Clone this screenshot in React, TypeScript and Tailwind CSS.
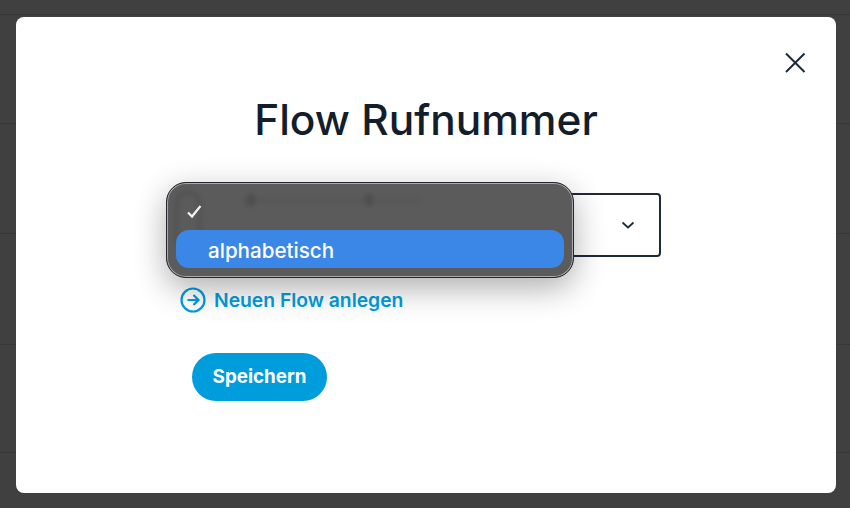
import React from "react";

export default function App() {
  return (
    <div className="relative w-[850px] h-[508px] overflow-hidden bg-[#404040] font-['Inter',sans-serif]">
      {/* dimmed page rows behind the dialog */}
      <div className="flex flex-col pt-[14px]">
        {[109, 110, 111, 108, 56].map((h, i) => (
          <div key={i} className="border-t border-[#383838]" style={{ height: h }} />
        ))}
      </div>

      {/* dialog */}
      <div className="absolute left-[16px] top-[17px] w-[820px] h-[476px] rounded-[8px] bg-white">
        <div className="relative flex flex-col h-full pt-[74px] pl-[159px]">
          <button className="absolute right-[29px] top-[34px] w-[24px] h-[24px] flex items-center justify-center text-[#1d2a3d]">
            <svg width="24" height="24" viewBox="0 0 24 24" fill="none" stroke="currentColor" strokeWidth="2">
              <path d="M3 2.5 L21.5 21 M21.5 2.5 L3 21" />
            </svg>
          </button>

          <h1 className="w-[502px] text-center text-[42.4px] leading-[58px] font-[450] text-[#141d2b]">
            Flow Rufnummer
          </h1>

          <div className="mt-[44px] w-[486px] h-[64px] rounded-[4px] border-2 border-[#1d2a3d] flex items-center justify-end pr-[23px] text-[#1d2a3d]">
            <svg width="16" height="16" viewBox="0 0 16 16" fill="none" stroke="currentColor" strokeWidth="1.7">
              <path d="M2.5 5.5 L8 10.5 L13.5 5.5" />
            </svg>
          </div>

          <a className="mt-[30px] ml-[5px] flex items-center gap-[8px] text-[#009ddd] text-[19.3px] leading-[26px] font-semibold">
            <svg width="26" height="26" viewBox="0 0 26 26" fill="none" stroke="currentColor" strokeWidth="2.2">
              <circle cx="13" cy="13" r="11.5" />
              <path d="M7.5 13 H18 M13.5 8 L18.5 13 L13.5 18" />
            </svg>
            <span>Neuen Flow anlegen</span>
          </a>

          <button className="mt-[40px] ml-[17px] w-[135px] h-[48px] rounded-full bg-[#009ddd] text-white text-[18.8px] font-bold">
            Speichern
          </button>
        </div>
      </div>

      {/* native select popup */}
      <div className="absolute left-[166px] top-[182px] w-[408px] h-[96px] rounded-[20px] border border-[#23262c] bg-[#5b5b5b] shadow-[0_0_0_1px_#a9abae_inset,0_10px_32px_rgba(0,0,0,0.32)] px-[9px] pt-[8px] overflow-hidden">
        <div className="absolute left-[79px] top-[14px] w-[180px] h-[6px] flex items-center blur-[2px] opacity-70">
          <span className="w-[10px] h-[12px] rounded-full bg-[#4a4a4a]" />
          <span className="w-[108px] h-[3px] bg-[#545454]" />
          <span className="w-[10px] h-[12px] rounded-full bg-[#4a4a4a]" />
          <span className="w-[48px] h-[3px] bg-[#545454]" />
        </div>
        <div className="absolute left-[8px] top-[8px] w-[26px] h-[60px] rounded-full border-[3px] border-[#505050] blur-[2px]" />
        <div className="relative h-[39px] flex items-center pl-[10px] pt-[2px]">
          <svg width="17" height="15" viewBox="0 0 17 15" fill="none" stroke="#f2f2f2" strokeWidth="2.2">
            <path d="M2 8.5 L6 12.5 L14.5 2" />
          </svg>
        </div>
        <div className="relative h-[38px] rounded-[13px] bg-[#3b87e8] text-white text-[20.6px] leading-[41px] pl-[32px] font-[450]">
          alphabetisch
        </div>
      </div>
    </div>
  );
}
